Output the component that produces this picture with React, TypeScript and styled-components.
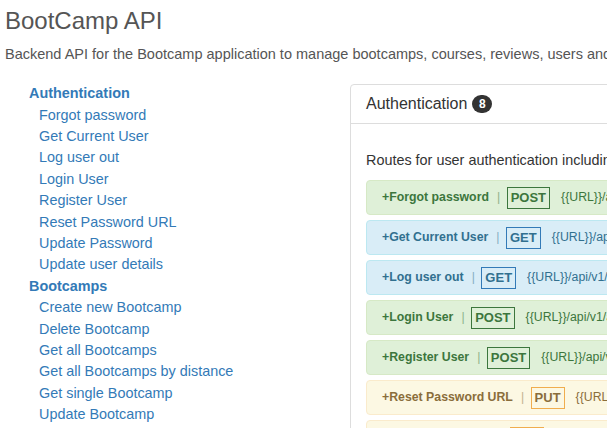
import React from "react";
import styled, { createGlobalStyle } from "styled-components";

const Global = createGlobalStyle`
  html, body { margin: 0; padding: 0; overflow: hidden; background: #fff; }
  body {
    font-family: "Liberation Sans", Arial, Helvetica, sans-serif;
    font-size: 14.4px;
    line-height: 1.42857;
    color: #333;
  }
  * { box-sizing: border-box; }
`;

type Tone = "success" | "info" | "warning";

const tones: Record<Tone, { bg: string; border: string; fg: string; method: string }> = {
  success: { bg: "#dff0d8", border: "#d6e9c6", fg: "#3c763d", method: "#3c763d" },
  info: { bg: "#d9edf7", border: "#bce8f1", fg: "#31708f", method: "#337ab7" },
  warning: { bg: "#fcf8e3", border: "#faebcc", fg: "#8a6d3b", method: "#f0ad4e" },
};

const Page = styled.div`
  padding: 0 5px;
  width: 1100px;
`;

const Title = styled.h1`
  margin: 8px 0 0;
  font-size: 24px;
  line-height: 1.1;
  font-weight: 400;
  color: #555;
`;

const Lead = styled.p`
  margin: 10px 0 0;
  font-size: 14.5px;
  color: #555;
  white-space: nowrap;
`;

const Layout = styled.div`
  display: grid;
  grid-template-columns: 345px 720px;
  align-items: start;
  margin-top: 17px;
`;

const Sidebar = styled.nav`
  padding-top: 1px;
  padding-left: 24px;
  line-height: 21.4px;
`;

const GroupTitle = styled.a`
  display: block;
  font-weight: 700;
  color: #337ab7;
  text-decoration: none;
`;

const Item = styled.a`
  display: block;
  padding-left: 10px;
  color: #337ab7;
  text-decoration: none;
  white-space: nowrap;
`;

const Panel = styled.section`
  margin-top: 2px;
  border: 1px solid #ddd;
  border-radius: 4px;
  background: #fff;
  min-height: 420px;
`;

const PanelHeading = styled.div`
  padding: 10px 15px;
  border-bottom: 1px solid #ddd;
`;

const PanelTitle = styled.h3`
  margin: 0;
  font-size: 16px;
  line-height: 1.1;
  font-weight: 400;
  color: #333;
`;

const Badge = styled.span`
  display: inline-block;
  vertical-align: middle;
  min-width: 20px;
  height: 18px;
  margin-left: 5px;
  margin-top: -2px;
  padding: 0 6px;
  border-radius: 9px;
  background: #333;
  color: #fff;
  font-size: 12px;
  font-weight: 700;
  line-height: 18px;
  text-align: center;
`;

const PanelBody = styled.div`
  padding: 15px;
`;

const Description = styled.p`
  margin: 11px 0 10px;
  white-space: nowrap;
`;

const Route = styled.div<{ $tone: Tone }>`
  display: flex;
  align-items: center;
  height: 35px;
  margin-bottom: 5px;
  padding: 0 15px;
  border: 1px solid ${(p) => tones[p.$tone].border};
  border-radius: 4px;
  background: ${(p) => tones[p.$tone].bg};
  color: ${(p) => tones[p.$tone].fg};
  font-size: 12.3px;
  white-space: nowrap;
`;

const RouteName = styled.strong`
  font-weight: 700;
`;

const Sep = styled.span`
  margin: 0 6.5px 0 8px;
  opacity: 0.5;
`;

const Method = styled.span<{ $tone: Tone }>`
  padding: 0 3px;
  border: 1px solid ${(p) => tones[p.$tone].method};
  font-size: 13px;
  font-weight: 700;
  line-height: 20px;
  margin-right: 11px;
`;

const Url = styled.span``;

const sidebar = [
  {
    title: "Authentication",
    items: [
      "Forgot password",
      "Get Current User",
      "Log user out",
      "Login User",
      "Register User",
      "Reset Password URL",
      "Update Password",
      "Update user details",
    ],
  },
  {
    title: "Bootcamps",
    items: [
      "Create new Bootcamp",
      "Delete Bootcamp",
      "Get all Bootcamps",
      "Get all Bootcamps by distance",
      "Get single Bootcamp",
      "Update Bootcamp",
    ],
  },
];

const routes: { name: string; method: string; tone: Tone; url: string }[] = [
  { name: "Forgot password", method: "POST", tone: "success", url: "{{URL}}/api/v1/auth/forgotpassword" },
  { name: "Get Current User", method: "GET", tone: "info", url: "{{URL}}/api/v1/auth/me" },
  { name: "Log user out", method: "GET", tone: "info", url: "{{URL}}/api/v1/auth/logout" },
  { name: "Login User", method: "POST", tone: "success", url: "{{URL}}/api/v1/auth/login" },
  { name: "Register User", method: "POST", tone: "success", url: "{{URL}}/api/v1/auth/register" },
  { name: "Reset Password URL", method: "PUT", tone: "warning", url: "{{URL}}/api/v1/auth/resetpassword/:token" },
  { name: "Update Password", method: "PUT", tone: "warning", url: "{{URL}}/api/v1/auth/updatepassword" },
  { name: "Update user details", method: "PUT", tone: "warning", url: "{{URL}}/api/v1/auth/updatedetails" },
];

export default function App() {
  return (
    <>
      <Global />
      <Page>
        <Title>BootCamp API</Title>
        <Lead>
          Backend API for the Bootcamp application to manage bootcamps, courses, reviews, users and authentication
        </Lead>
        <Layout>
          <Sidebar>
            {sidebar.map((g) => (
              <div key={g.title}>
                <GroupTitle href="#">{g.title}</GroupTitle>
                {g.items.map((i) => (
                  <Item key={i} href="#">
                    {i}
                  </Item>
                ))}
              </div>
            ))}
          </Sidebar>
          <Panel>
            <PanelHeading>
              <PanelTitle>
                Authentication<Badge>8</Badge>
              </PanelTitle>
            </PanelHeading>
            <PanelBody>
              <Description>
                Routes for user authentication including register, login, reset password, etc
              </Description>
              {routes.map((r) => (
                <Route key={r.name} $tone={r.tone}>
                  <RouteName>+{r.name}</RouteName>
                  <Sep>|</Sep>
                  <Method $tone={r.tone}>{r.method}</Method>
                  <Url>{r.url}</Url>
                </Route>
              ))}
            </PanelBody>
          </Panel>
        </Layout>
      </Page>
    </>
  );
}
